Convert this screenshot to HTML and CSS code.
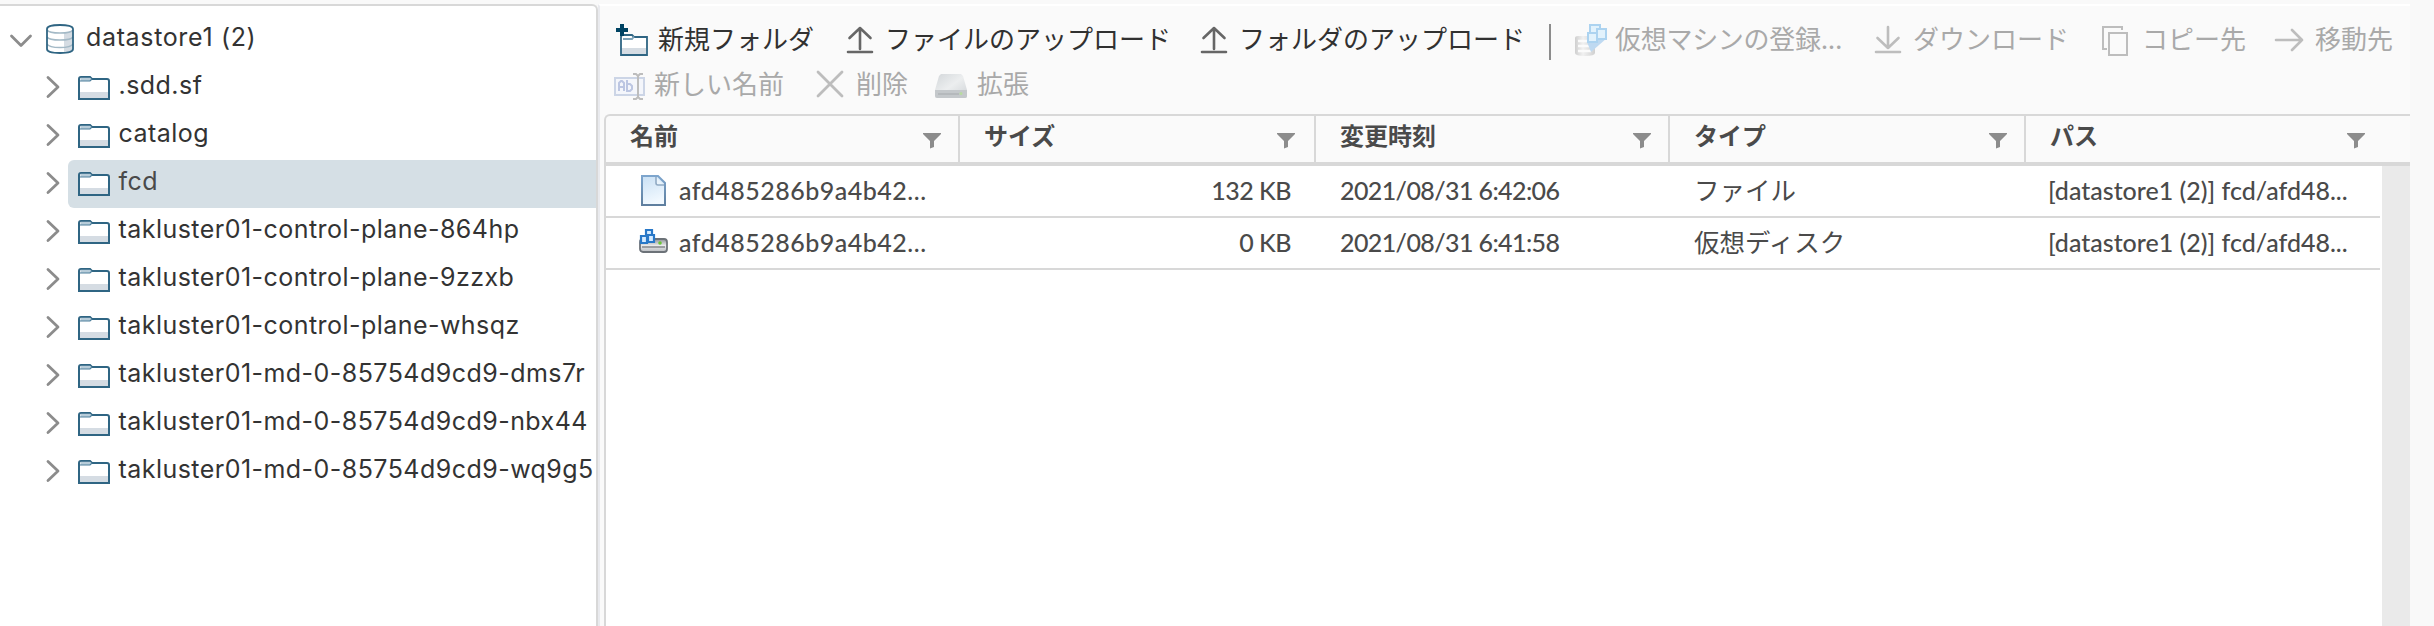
FILE: index.html
```html
<!DOCTYPE html>
<html lang="ja">
<head>
<meta charset="utf-8">
<title>datastore1 (2)</title>
<link rel="stylesheet" href="styles.css">
</head>
<body>
<svg class="defs" width="0" height="0">
  <defs>
    <linearGradient id="page" x1="0" y1="0" x2="0.3" y2="1"><stop offset="0" stop-color="#c9e0f4"/><stop offset="1" stop-color="#f2f9ff"/></linearGradient>
    <linearGradient id="pageEdge" x1="0" y1="0" x2="0" y2="1"><stop offset="0" stop-color="#7da5cd"/><stop offset="1" stop-color="#5f7f9f"/></linearGradient>
    <linearGradient id="metal" x1="0" y1="0" x2="0" y2="1"><stop offset="0" stop-color="#8d9196"/><stop offset=".5" stop-color="#e9eaeb"/><stop offset="1" stop-color="#b9bcc0"/></linearGradient>
    <linearGradient id="drive" x1="0" y1="0" x2="1" y2="1"><stop offset="0" stop-color="#d3d7da"/><stop offset=".5" stop-color="#eceeef"/><stop offset="1" stop-color="#cfd3d6"/></linearGradient>
    <linearGradient id="stack" x1="0" y1="0" x2="1" y2="0"><stop offset="0" stop-color="#cfcfcf"/><stop offset=".4" stop-color="#f1f1f1"/><stop offset="1" stop-color="#d0d0d0"/></linearGradient>
    <symbol id="right" viewBox="0 0 16 24"><path d="M3 2.500L13 12L3 21.500" fill="none" stroke="#8c8c8c" stroke-width="2.800" stroke-linecap="round" stroke-linejoin="round"/></symbol>
    <symbol id="down" viewBox="0 0 24 16"><path d="M2.500 3L12 12.500L21.500 3" fill="none" stroke="#8c8c8c" stroke-width="2.800" stroke-linecap="round" stroke-linejoin="round"/></symbol>
    <symbol id="folder" viewBox="0 0 32 24">
      <path d="M1 23V3Q1 1 3 1H12L14 3H29Q31 3 31 5V23Z" fill="#fff"/>
      <path d="M2 16H30V22H2Z" fill="#d5dce3"/>
      <path d="M1 23V3Q1 1 3 1H12L14 3H29Q31 3 31 5V23Z" fill="none" stroke="#2f6583" stroke-width="2"/>
      <path d="M2.500 1.800H12L13.500 3L12 5H2.500Z" fill="#b7ccd9"/><path d="M2 5H12L14 3" fill="none" stroke="#4d7f9c" stroke-width="1.200"/>
    </symbol>
    <symbol id="funnel" viewBox="0 0 18 16"><path d="M0 0H18V1L11 8V14L7 15.500V8L0 1Z" fill="#8c8c8c"/></symbol>
    <symbol id="up" viewBox="0 0 28 30"><path d="M14 24V3M3.500 13L14 3L24.500 13M2 27H26" fill="none" stroke="currentColor" stroke-width="2.600" stroke-linecap="round" stroke-linejoin="round"/></symbol>
  </defs>
</svg>
<div class="app">
  <aside class="tree">
    <div class="node root"><svg class="caret-down"><use href="#down"/></svg>
      <svg class="db" viewBox="0 0 28 30"><path d="M1 5V25C1 28 7 29 14 29S27 28 27 25V5Z" fill="#fff"/><path d="M18 8.500Q25 8 26.500 5V25Q25 28 18 28.500Z" fill="#d5dce3"/><ellipse cx="14" cy="4.500" rx="13" ry="3.500" fill="#fff"/><path d="M1 6Q3 9 14 9T27 6M1 13Q3 16 14 16T27 13M1 20Q3 23.500 14 23.500T27 20" fill="none" stroke="#a3b9c6" stroke-width="1.500"/><path d="M1 5V25C1 28 7 29 14 29S27 28 27 25V5C27 2 21 1 14 1S1 2 1 5Z" fill="none" stroke="#2f6583" stroke-width="1.800"/></svg>
      <span>datastore1 (2)</span></div>
    <div class="node"><svg class="caret"><use href="#right"/></svg><div class="label"><svg class="folder"><use href="#folder"/></svg><span>.sdd.sf</span></div></div>
    <div class="node"><svg class="caret"><use href="#right"/></svg><div class="label"><svg class="folder"><use href="#folder"/></svg><span>catalog</span></div></div>
    <div class="node"><svg class="caret"><use href="#right"/></svg><div class="label selected"><svg class="folder"><use href="#folder"/></svg><span>fcd</span></div></div>
    <div class="node"><svg class="caret"><use href="#right"/></svg><div class="label"><svg class="folder"><use href="#folder"/></svg><span>takluster01-control-plane-864hp</span></div></div>
    <div class="node"><svg class="caret"><use href="#right"/></svg><div class="label"><svg class="folder"><use href="#folder"/></svg><span>takluster01-control-plane-9zzxb</span></div></div>
    <div class="node"><svg class="caret"><use href="#right"/></svg><div class="label"><svg class="folder"><use href="#folder"/></svg><span>takluster01-control-plane-whsqz</span></div></div>
    <div class="node"><svg class="caret"><use href="#right"/></svg><div class="label"><svg class="folder"><use href="#folder"/></svg><span>takluster01-md-0-85754d9cd9-dms7r</span></div></div>
    <div class="node"><svg class="caret"><use href="#right"/></svg><div class="label"><svg class="folder"><use href="#folder"/></svg><span>takluster01-md-0-85754d9cd9-nbx44</span></div></div>
    <div class="node"><svg class="caret"><use href="#right"/></svg><div class="label"><svg class="folder"><use href="#folder"/></svg><span>takluster01-md-0-85754d9cd9-wq9g5</span></div></div>
  </aside>
  <main class="main">
    <div class="toolbar">
      <div class="tools first">
        <button class="tool new-folder"><svg viewBox="0 0 32 32"><path d="M5 31V13Q5 11 7 11H16L18 13H31V31Z" fill="#fff"/><path d="M5 24H30V30H5Z" fill="#d5dce3"/><path d="M5 31V13Q5 11 7 11H16L18 13H31V31Z" fill="none" stroke="#2f6583" stroke-width="1.800"/><path d="M7 15H16L18 12.500" fill="none" stroke="#7fa3b8" stroke-width="2"/><path d="M6 0V12M0 6H12" stroke="#004363" stroke-width="4"/></svg><span>新規フォルダ</span></button>
        <button class="tool upload-file"><svg class="arrow"><use href="#up"/></svg><span>ファイルのアップロード</span></button>
        <button class="tool upload-folder"><svg class="arrow"><use href="#up"/></svg><span>フォルダのアップロード</span></button>
        <i class="divider"></i>
        <button class="tool register" disabled><svg viewBox="0 0 32 32"><path d="M0 14Q0 12 3 12H17Q20 12 20 14V29Q20 32 10 32T0 29Z" fill="url(#stack)"/><path d="M3 17H16M3 22H16M3 27H16" stroke="#fbfbfb" stroke-width="2.500"/><path d="M12 18L32 14L16 28Z" fill="#bed9f1"/><g fill="#e2f2fc" stroke="#acd3f0" stroke-width="2"><path d="M15 1H25V10H15Z"/><path d="M22 5H31V15H22Z"/><path d="M13 9H22V18H13Z"/></g></svg><span>仮想マシンの登録...</span></button>
        <button class="tool download" disabled><svg class="arrow" viewBox="0 0 28 30"><path d="M14 2V23M3.500 13L14 23L24.500 13M2 27H26" fill="none" stroke="#bdbdbd" stroke-width="2.600" stroke-linecap="round" stroke-linejoin="round"/></svg><span>ダウンロード</span></button>
        <button class="tool copy" disabled><svg viewBox="0 0 32 32"><path d="M7 25H3V3H22V6M9 9H27V31H9Z" fill="none" stroke="#bdbdbd" stroke-width="2"/></svg><span>コピー先</span></button>
        <button class="tool move" disabled><svg viewBox="0 0 32 32"><path d="M3 16H29M19 6L29 16L19 26" fill="none" stroke="#bdbdbd" stroke-width="2.600" stroke-linecap="round" stroke-linejoin="round"/></svg><span>移動先</span></button>
      </div>
      <div class="tools second">
        <button class="tool rename" disabled><svg viewBox="0 0 32 32"><path d="M1 9H30V26H1Z" fill="#f4f6fb" stroke="#ccd5e6" stroke-width="2"/><path d="M5 22V14L7 12H8L10 14V22M5 18H10M13 11V22H16L18 20V17L16 15H13" fill="none" stroke="#bcc6e2" stroke-width="2"/><path d="M19 5H22L24 7L26 5H29M24 7V28M19 30H22L24 28L26 30H29" fill="none" stroke="#bdbdbd" stroke-width="2"/></svg><span>新しい名前</span></button>
        <button class="tool delete" disabled><svg viewBox="0 0 32 32"><path d="M4 3L28 27M28 3L4 27" stroke="#bdbdbd" stroke-width="2.800" stroke-linecap="round"/></svg><span>削除</span></button>
        <button class="tool expand" disabled><svg viewBox="0 0 32 32"><path d="M6 5H26L28 7L32 21V27Q32 29 30 29H2Q0 29 0 27V21L4 7Z" fill="url(#drive)"/><path d="M0 21H32V27Q32 29 30 29H2Q0 29 0 27Z" fill="#c4c8cb"/><path d="M3 25H24" stroke="#b5b9bc" stroke-width="2"/><circle cx="26" cy="24.500" r="1.500" fill="#b8dba0"/></svg><span>拡張</span></button>
      </div>
    </div>
    <div class="grid">
      <div class="head">
        <div class="th"><span>名前</span><svg class="funnel"><use href="#funnel"/></svg></div>
        <div class="th"><span>サイズ</span><svg class="funnel"><use href="#funnel"/></svg></div>
        <div class="th"><span>変更時刻</span><svg class="funnel"><use href="#funnel"/></svg></div>
        <div class="th"><span>タイプ</span><svg class="funnel"><use href="#funnel"/></svg></div>
        <div class="th"><span>パス</span><svg class="funnel"><use href="#funnel"/></svg></div>
      </div>
      <div class="body">
        <div class="rows">
          <div class="row">
            <div class="td name"><svg viewBox="0 0 32 32"><path d="M4 1H20L27 8V30H4Z" fill="url(#page)" stroke="url(#pageEdge)" stroke-width="2"/><path d="M18 2V8Q18 10 20 10H26" fill="#eaf4fc" stroke="#91aac4" stroke-width="1.600"/></svg><span>afd485286b9a4b42...</span></div>
            <div class="td size">132 KB</div>
            <div class="td date">2021/08/31 6:42:06</div>
            <div class="td type">ファイル</div>
            <div class="td path">[datastore1 (2)] fcd/afd48...</div>
          </div>
          <div class="row">
            <div class="td name"><svg viewBox="0 0 32 32"><rect x="2" y="12" width="27" height="13" rx="3" fill="url(#metal)" stroke="#6c7278" stroke-width="1.800"/><path d="M4 20H27" stroke="#85898d" stroke-width="1.500"/><circle cx="22" cy="16" r="1.800" fill="#6bc438"/><g fill="#d5ebff" stroke="#2878c8" stroke-width="2.200"><path d="M8 3H14V9H8Z"/><path d="M3 9H9V16H3Z"/><path d="M10 8H16V15H10Z"/></g></svg><span>afd485286b9a4b42...</span></div>
            <div class="td size">0 KB</div>
            <div class="td date">2021/08/31 6:41:58</div>
            <div class="td type">仮想ディスク</div>
            <div class="td path">[datastore1 (2)] fcd/afd48...</div>
          </div>
        </div>
        <div class="scroll"></div>
      </div>
    </div>
  </main>
</div>
</body>
</html>
```
FILE: styles.css
```css
* { box-sizing: border-box; }
body { margin: 0; background: #f9f9f9; color: #333; font-family: Inter, "Noto Sans CJK JP", sans-serif; font-size: 26px; overflow: hidden; }
svg { display: block; flex: none; }
.defs { position: absolute; }
.app { display: flex; width: 2434px; height: 626px; padding-top: 4px; }
.tree { width: 598px; height: 622px; flex: none; padding-top: 10px; background: #fff; border-top: 2px solid #d8d8d8; border-right: 2px solid #d8d8d8; border-top-right-radius: 6px; overflow: hidden; }
.node { display: flex; align-items: center; height: 48px; font-size: 25px; letter-spacing: 0.46px; white-space: nowrap; }
.node span { line-height: 48px; padding-bottom: 7px; }
.root { padding-left: 9px; letter-spacing: 0.65px; }
.caret-down { width: 24px; height: 16px; margin-top: 1px; }
.db { width: 28px; height: 30px; margin: -2px 12px 0 13px; }
.caret { width: 16px; height: 24px; margin: -2px 0 0 45px; }
.label { display: flex; align-items: center; flex: 1; height: 48px; margin-left: 7px; padding-left: 10px; border-radius: 6px 0 0 6px; }
.selected { background: #d5dfe5; color: #4a4a4a; }
.folder { width: 32px; height: 24px; margin-right: 8.5px; }
.main { width: 1812px; height: 622px; flex: none; background: #fafafa; border-left: 2px solid #e9eaee; border-top: 2px solid #fff; }
.toolbar { height: 108px; padding-top: 10px; }
.tools { display: flex; align-items: center; padding-left: 16px; }
.first { height: 48px; }
.second { height: 42px; padding-left: 14px; }
.tool { display: flex; align-items: center; height: 42px; padding: 0; border: 0; background: none; color: #313131; font: 26px/38px Inter, "Noto Sans CJK JP", sans-serif; white-space: nowrap; }
.tool:disabled { color: #a9a9a9; }
.tool svg { width: 32px; height: 32px; margin-right: 10px; }
.tool svg.arrow { width: 28px; height: 30px; margin: 0 11px 0 2px; color: #666; }
.divider { width: 2px; height: 36px; margin: 4px 24px 0; background: #8c8c8c; }
.upload-file { margin-left: 30px; }
.upload-folder { margin-left: 27px; }
.tool.register svg { margin-right: 8px; }
.register span { width: 226px; letter-spacing: -0.3px; }
.download { margin-left: 31px; }
.copy { margin-left: 31px; }
.move { margin-left: 27px; }
.tool.rename svg { margin-right: 8px; }
.delete { margin-left: 30px; }
.expand { margin-left: 27px; }
.grid { margin-left: 4px; height: 512px; border-left: 2px solid #d8d8d8; border-top: 2px solid #d8d8d8; border-top-left-radius: 6px; overflow: hidden; color: #4a4a4a; }
.head { display: grid; grid-template-columns: 354px 356px 354px 356px 354px; height: 50px; border-bottom: 4px solid #d8d8d8; font: bold 24px/36px "Noto Sans CJK JP", sans-serif; }
.th { display: flex; justify-content: space-between; padding: 1px 17px 0 24px; border-right: 2px solid #d8d8d8; }
.th:nth-child(2) { padding-right: 19px; }
.th:last-child { padding-right: 15px; border-right: 0; }
.funnel { width: 18px; height: 16px; margin-top: 16px; }
.body { display: flex; height: 460px; background: #fff; }
.rows { width: 1774px; }
.row { display: grid; grid-template-columns: 354px 356px 354px 356px 354px; height: 52px; border-bottom: 2px solid #d8d8d8; font-family: Lato, "Noto Sans CJK JP", sans-serif; font-size: 25px; font-weight: 500; }
.td { display: flex; align-items: center; height: 48px; padding-left: 24px; white-space: nowrap; }
.name { height: 50px; padding-left: 32px; letter-spacing: 0.5px; }
.name span { padding-bottom: 2px; }
.name svg { width: 32px; height: 32px; margin-right: 9px; }
.size { justify-content: flex-end; padding-right: 25px; letter-spacing: -0.5px; }
.date { letter-spacing: -0.6px; }
.type { height: 45px; font-size: 25.5px; font-weight: 400; }
.path { padding-left: 22px; }
.scroll { width: 28px; margin-left: 2px; background: #eaeaea; }
```
